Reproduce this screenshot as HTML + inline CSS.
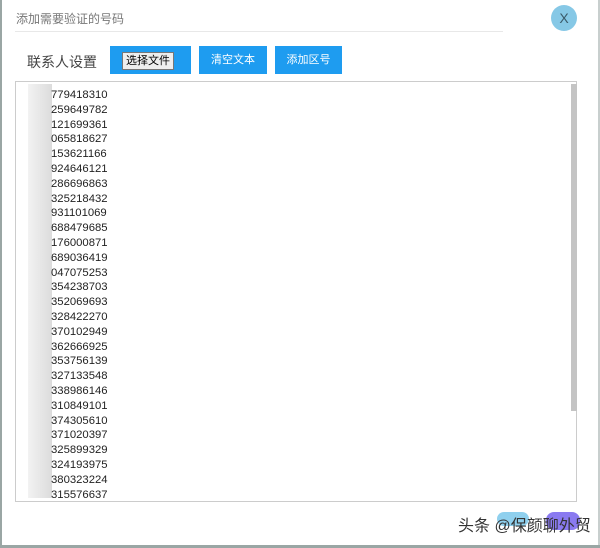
<!DOCTYPE html>
<html><head><meta charset="utf-8"><style>
body{margin:0;width:600px;height:548px;background:#fff;overflow:hidden;position:relative;font-family:"Liberation Sans","Noto Sans CJK SC",sans-serif}
.bl{position:absolute;left:0;top:0;width:2px;height:548px;background:#9aa6a4}
.bb{position:absolute;left:0;bottom:0;width:600px;height:3px;background:#9aa6a4}
.br{position:absolute;right:0;top:0;width:2px;height:548px;background:#c8cfce}
.title{position:absolute;left:16px;top:10px;font-size:12px;color:#777}
.hr{position:absolute;left:15px;top:31px;height:1px;background:#e8e8e8;width:488px}
.x{position:absolute;left:551px;top:5px;width:26px;height:26px;border-radius:50%;background:#86c8e6;color:#3a5a6a;font-size:14px;text-align:center;line-height:26px}
.lab{position:absolute;left:27px;top:52px;font-size:14px;color:#444}
.btn{position:absolute;top:46px;height:28px;background:#1e9cf0;color:#fff;font-size:11px;text-align:center;line-height:28px}
.file{position:absolute;left:122px;top:52px;width:50px;height:16px;background:#eee;border:1px solid #777;font-size:11px;color:#000;line-height:16px;text-align:center}
.ta{position:absolute;left:15px;top:81px;width:562px;height:421px;border:1px solid #ccc;box-sizing:border-box}
.sb{position:absolute;left:571px;top:84px;width:6px;height:327px;background:#c4c4c4}
.blur{position:absolute;left:28px;top:84px;width:24px;height:414px;background:linear-gradient(90deg,#f2f2f2,#dcdcdc)}
.nums{position:absolute;left:51px;top:88px;font-size:11.3px;line-height:14.8px;color:#222}
.wm{position:absolute;left:458px;top:512px;font-size:16px;color:#333}
</style></head><body>
<div class="bl"></div><div class="br"></div><div class="bb"></div>
<div class="title">添加需要验证的号码</div>
<div class="hr"></div>
<div class="x">X</div>
<div class="lab">联系人设置</div>
<div class="btn" style="left:110px;width:81px"></div>
<div class="file">选择文件</div>
<div class="btn" style="left:199px;width:68px">清空文本</div>
<div class="btn" style="left:275px;width:67px">添加区号</div>
<div class="ta"></div>
<div class="blur"></div>
<div class="sb"></div>
<div class="nums">779418310<br>259649782<br>121699361<br>065818627<br>153621166<br>924646121<br>286696863<br>325218432<br>931101069<br>688479685<br>176000871<br>689036419<br>047075253<br>354238703<br>352069693<br>328422270<br>370102949<br>362666925<br>353756139<br>327133548<br>338986146<br>310849101<br>374305610<br>371020397<br>325899329<br>324193975<br>380323224<br>315576637</div>
<div style="position:absolute;left:497px;top:512px;width:32px;height:14px;border-radius:7px;background:#8fd0ee"></div>
<div style="position:absolute;left:546px;top:512px;width:34px;height:18px;border-radius:8px;background:#8a7af0"></div>
<div class="wm">头条 @保颜聊外贸</div>
</body></html>
